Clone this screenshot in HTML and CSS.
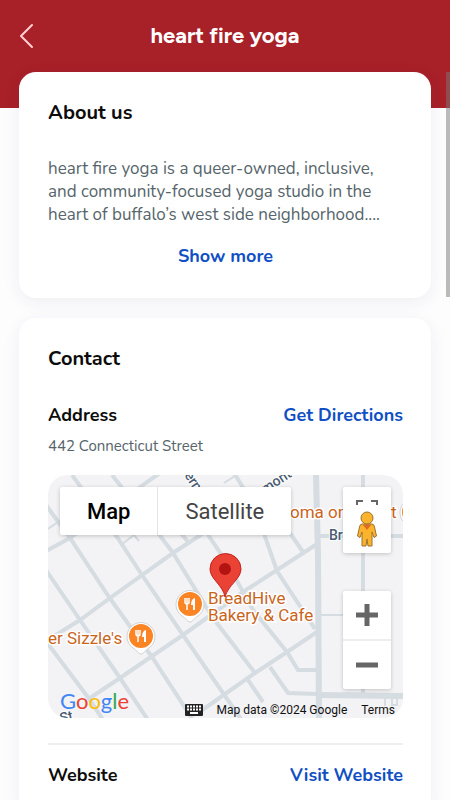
FILE: index.html
```
<!DOCTYPE html>
<html lang="en">
<head>
    <meta charset="UTF-8">
    <meta name="viewport" content="width=device-width, initial-scale=1.0">
    <title>heart fire yoga</title>
    <link rel="stylesheet" href="styles.css">
</head>
<body>
    <div class="page">
        <header class="header">
            <button class="back-btn" type="button" aria-label="Back">
                <svg width="16" height="28" viewBox="0 0 16 28"><path d="M14 3 L3 14 L14 25" /></svg>
            </button>
            <h1>heart fire yoga</h1>
        </header>

        <main class="content">
            <section class="card">
                <h2>About us</h2>
                <p class="about-text">heart fire yoga is a queer-owned, inclusive,<br>and community-focused yoga studio in the<br>heart of buffalo’s west side neighborhood....</p>
                <button class="show-more" type="button">Show more</button>
            </section>

            <section class="card">
                <h2>Contact</h2>
                <div class="row">
                    <h3>Address</h3>
                    <a href="#directions">Get Directions</a>
                </div>
                <p class="address">442 Connecticut Street</p>

                <div class="map">
                    <svg class="map-canvas" viewBox="0 0 355 243" preserveAspectRatio="xMidYMid slice">
                        <!-- streets -->
                        <g class="streets">
                            <path d="M24 0 L69 62 L94 100 L135 160 L195 247" />
                            <path d="M64 0 L110 58 L125 78 L165 143 L207 198" />
                            <path d="M200 205 L215 227" />
                            <path d="M-2 30 L22 63 L61 122 L104 182 L145 245" />
                            <path d="M-2 95 L32 145 L72 203 L100 245" />
                            <path d="M0 169 L42 225 L55 245" />
                            <path d="M120 42 L140 67" />
                            <path d="M140 30 L179 88 L205 135 L239 177 L250 195 H269" />
                            <path d="M186 -2 L206 30 L229 96 L267 154" />
                            <path d="M235 48 L255 77" />
                            <path d="M222 192 L240 218 L269 219" />
                            <path d="M-2 76 L22 63 L92 12 L112 -2" />
                            <path d="M-2 166 L32 145 L62 123 L125 78 L165 52" />
                            <path d="M42 223 L72 203 L135 160 L195 117 L229 95 L269 69" />
                            <path d="M150 238 L207 198 L239 177 L269 157" />
                            <path d="M315 0 V222" />
                            <path d="M269 61 H355" />
                        </g>
                        <g class="lanes">
                            <path d="M73 70 L86 60 L91 66" />
                            <path d="M0 54 L10 47" />
                            <path d="M176 8 L187 1" />
                            <path d="M269 140 H297" />
                            <path d="M337 222 V231 M344 222 V230 H349 V222" />
                        </g>
                        <path class="avenue" d="M268 0 L270 80 L271 243" />
                        <path class="avenue" d="M269 220 L355 221" />

                        <!-- street names -->
                        <g class="street-names">
                            <text transform="translate(131 -7) rotate(56)">Verm</text>
                            <text transform="translate(217 19) rotate(-33)">mont</text>
                            <text x="281" y="65">Bryant</text>
                            <text transform="translate(13 248) rotate(-14)">St</text>
                        </g>

                        <!-- places -->
                        <g class="places">
                            <text x="160" y="129">BreadHive</text>
                            <text x="160" y="146">Bakery &amp; Cafe</text>
                            <text x="0" y="169">er Sizzle's</text>
                            <text x="242" y="43">oma on</text>
                            <text x="343" y="43">t</text>
                        </g>
                        <defs>
                            <g id="food">
                                <path d="M0 18 C-3 18 -4 14 -8 12 A14 14 0 1 1 8 12 C4 14 3 18 0 18Z" fill="#fff" stroke="#d2d2d2" stroke-width="1" />
                                <circle r="12" fill="#fb8524" />
                                <path d="M-5 -6 V-2 Q-5 0 -3 0 Q-1 0 -1 -2 V-6 M-3 -6 V6" fill="none" stroke="#fff" stroke-width="1.5" />
                                <path d="M5 -6 Q1 -5 1 1 H3 V6 H5Z" fill="#fff" />
                            </g>
                        </defs>
                        <use href="#food" x="142" y="129" />
                        <use href="#food" x="93" y="161" />
                        <use href="#food" x="366" y="37" />

                        <!-- studio pin -->
                        <path d="M177 122 C175 110 162 104 162 94 A15 15 0 0 1 193 94 C193 104 180 110 177 122Z" fill="#ea4335" stroke="#c5221f" stroke-width="1" />
                        <circle cx="177" cy="94" r="6" fill="#b31412" />
                    </svg>

                    <div class="map-type">
                        <button class="active" type="button">Map</button>
                        <button type="button">Satellite</button>
                    </div>

                    <div class="map-side">
                        <div class="view-controls">
                            <button class="fullscreen" type="button" aria-label="Fullscreen">
                                <svg width="22" height="22" viewBox="0 0 22 22"><path d="M1 7 V1 H7 M15 1 H21 V7 M21 15 V21 H15 M7 21 H1 V15" /></svg>
                            </button>
                            <button class="pegman" type="button" aria-label="Street View">
                                <svg width="20" height="36" viewBox="0 0 20 36">
                                    <path d="M5 13 H15 Q17 13 17.500 16 L19.500 25 L17 26.500 L15 21 V35 H11 L10 28 L9 35 H5 V21 L3 26.500 L.5 25 L2.500 16 Q3 13 5 13Z" fill="#fbb32b" stroke="#9a7331" stroke-width="1" />
                                    <path d="M5.500 13.500 H14.500 L10 19Z" fill="#e06c24" />
                                    <circle cx="10" cy="7" r="6" fill="#fbb32b" stroke="#9a7331" stroke-width="1" />
                                </svg>
                            </button>
                        </div>
                        <div class="zoom">
                            <button type="button" aria-label="Zoom in">
                                <svg width="22" height="22" viewBox="0 0 22 22"><path d="M0 11 H22 M11 0 V22" /></svg>
                            </button>
                            <button type="button" aria-label="Zoom out">
                                <svg width="22" height="22" viewBox="0 0 22 22"><path d="M0 11 H22" /></svg>
                            </button>
                        </div>
                    </div>

                    <div class="map-footer">
                        <div class="google"><span class="blue">G</span><span class="red">o</span><span class="yellow">o</span><span class="blue">g</span><span class="green">l</span><span class="red">e</span></div>
                        <div class="credits">
                            <button class="keyboard" type="button" aria-label="Keyboard shortcuts">
                                <svg width="18" height="12" viewBox="0 0 18 12">
                                    <rect width="18" height="12" rx="1" fill="#222" />
                                    <path d="M2 2.500 H16 M2 5.500 H16" stroke="#fff" stroke-width="2" stroke-dasharray="2 1" />
                                    <path d="M5 9 H13" stroke="#fff" stroke-width="2" />
                                </svg>
                            </button>
                            <span>Map data ©2024 Google</span>
                            <a href="#terms">Terms</a>
                        </div>
                    </div>
                </div>

                <div class="row website">
                    <h3>Website</h3>
                    <a href="#website">Visit Website</a>
                </div>
            </section>
        </main>
        <div class="scroll-thumb"></div>
    </div>
</body>
</html>
```
FILE: styles.css
```
:root {
    --brand-color: #a82028;
    --link-color: #104fc4;
    --text-color: #0c0c0c;
    --light-text-color: #56656b;
    --road-color: #d5dce2;
}

* {
    box-sizing: border-box;
}

body {
    margin: 0;
    background-color: #fdfdfe;
    color: var(--text-color);
    font-family: "Nunito", "Open Sans", sans-serif;
}

button {
    border: none;
    padding: 0;
    background: none;
    font-family: inherit;
    cursor: pointer;
}

a {
    text-decoration: none;
}

h1, h2, h3, p {
    margin: 0;
}

.page {
    height: 100vh;
    overflow-x: hidden;
    overflow-y: auto;
    scrollbar-width: none;
}

.header {
    display: grid;
    grid-template-columns: 36px 1fr 36px;
    align-items: center;
    height: 108px;
    padding: 0 18px 36px;
    background-color: var(--brand-color);
    color: #fff;
}

.header h1 {
    font-family: "Figtree", "Inter", sans-serif;
    font-size: 22px;
    font-weight: 700;
    line-height: 28px;
    text-align: center;
}

.back-btn {
    display: flex;
}

.back-btn svg {
    fill: none;
    stroke: #ffd0d2;
    stroke-width: 2;
    stroke-linecap: round;
    stroke-linejoin: round;
}

.content {
    display: flex;
    flex-direction: column;
    gap: 20px;
    margin-top: -36px;
    padding: 0 19px 20px;
}

.card {
    padding: 29px 28px 30px 29px;
    background-color: #fff;
    border-radius: 17px;
    box-shadow: 0 4px 18px rgba(40, 40, 90, 0.07);
}

h2 {
    font-size: 20px;
    font-weight: 700;
    line-height: 24px;
    margin-bottom: 32px;
}

.about-text {
    color: var(--light-text-color);
    font-size: 17px;
    line-height: 23px;
}

.show-more {
    display: block;
    margin: 18px auto 0;
    color: var(--link-color);
    font-size: 18px;
    font-weight: 700;
    line-height: 24px;
}

.row {
    display: flex;
    justify-content: space-between;
    line-height: 24px;
}

.row h3,
.row a {
    font-size: 18px;
    font-weight: 700;
}

.row a {
    color: var(--link-color);
}

.address {
    margin: 9px 0 19px;
    color: var(--light-text-color);
    font-size: 15px;
    line-height: 20px;
}

.website {
    margin-top: 25px;
    padding-top: 18px;
    border-top: 2px solid #efefef;
}

/* map */
.map {
    position: relative;
    display: flex;
    flex-wrap: wrap;
    justify-content: space-between;
    height: 243px;
    padding: 12px 12px 0;
    border-radius: 20px;
    background-color: #f3f2f4;
    font-family: Roboto, sans-serif;
    overflow: hidden;
}

.map-canvas {
    position: absolute;
    top: 0;
    left: 0;
    width: 100%;
    height: 100%;
}

.streets, .lanes, .avenue {
    fill: none;
    stroke: var(--road-color);
    stroke-width: 4;
}

.lanes {
    stroke-width: 2;
}

.avenue {
    stroke-width: 6;
}

.street-names {
    font-size: 14px;
    font-weight: 500;
    fill: #4a5b71;
    stroke: #fff;
    stroke-width: 2px;
    paint-order: stroke;
}

.places {
    font-size: 17px;
    fill: #c9651b;
    stroke: #fff;
    stroke-width: 3px;
    paint-order: stroke;
}

.map-type {
    position: relative;
    display: flex;
    height: 48px;
    background-color: #fff;
    border-radius: 2px;
    box-shadow: 0 1px 4px rgba(0, 0, 0, 0.2);
}

.map-type button {
    padding: 0 27px;
    color: #444;
    font-size: 22px;
}

.map-type .active {
    color: #000;
    font-weight: 500;
    border-right: 1px solid #e3e3e3;
}

.map-side {
    position: relative;
    display: flex;
    flex-direction: column;
    gap: 38px;
    width: 48px;
    height: 203px;
}

.view-controls,
.zoom {
    background-color: #fff;
    border-radius: 2px;
    box-shadow: 0 1px 4px rgba(0, 0, 0, 0.2);
}

.map-side button {
    display: flex;
    align-items: center;
    justify-content: center;
    width: 48px;
    height: 48px;
}

.map-side .fullscreen {
    height: 18px;
    align-items: flex-start;
    padding-top: 13px;
    overflow: hidden;
}

.fullscreen svg {
    flex-shrink: 0;
}

.fullscreen path {
    fill: none;
    stroke: #666;
    stroke-width: 2;
}

.zoom path {
    stroke: #666;
    stroke-width: 5;
}

.zoom button + button {
    border-top: 2px solid #eee;
    height: 50px;
}

.map-footer {
    position: relative;
    display: flex;
    justify-content: space-between;
    align-items: flex-end;
    width: 100%;
    height: 28px;
    padding-bottom: 1px;
}

.google {
    padding-bottom: 2px;
    font-family: Lato, sans-serif;
    font-size: 22px;
    line-height: 28px;
}

.blue { color: #4285f4; }
.red { color: #ea4335; }
.yellow { color: #fbbc05; }
.green { color: #34a853; }

.credits {
    display: flex;
    align-items: center;
    gap: 14px;
    margin-right: -4px;
    color: #111;
    font-size: 12px;
    line-height: 14px;
}

.credits a {
    color: inherit;
}

.keyboard {
    display: flex;
}

.scroll-thumb {
    position: fixed;
    top: 72px;
    right: 0;
    width: 4px;
    height: 225px;
    background-color: rgba(120, 120, 120, 0.5);
}
```
